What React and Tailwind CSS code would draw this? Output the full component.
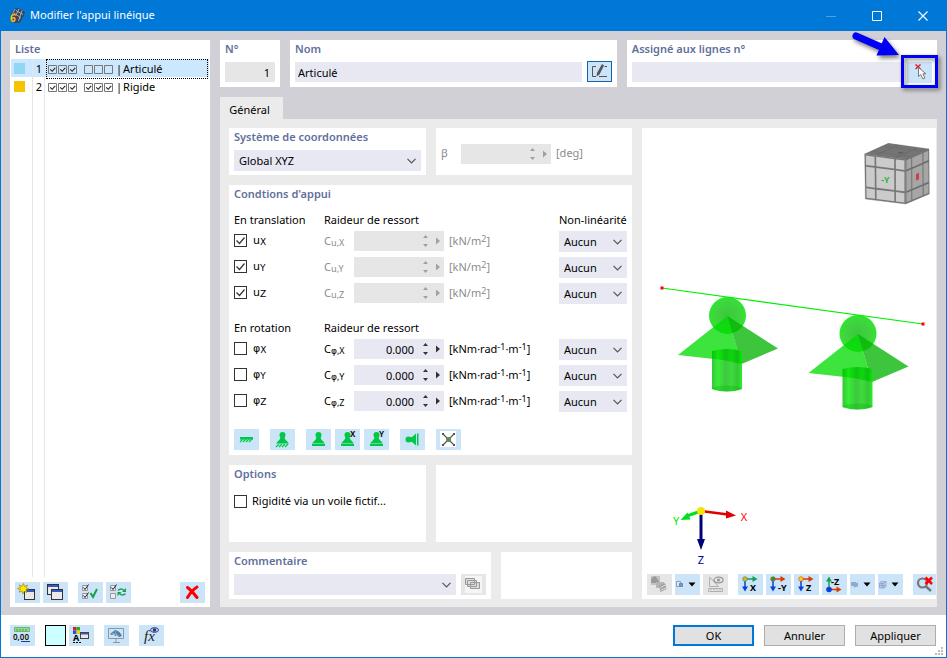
import { useState } from "react";

const AXES = ["X", "Y", "Z"];

const SUPPORTS = [
  { id: 1, name: "Articulé", swatch: "bg-[#8fd7f3]", translation: [true, true, true], rotation: [false, false, false] },
  { id: 2, name: "Rigide", swatch: "bg-[#f5c400]", translation: [true, true, true], rotation: [true, true, true] },
];

/* ---------- small controls ---------- */

const IconButton = ({ label, disabled, className = "", children }) => (
  <button
    type="button"
    aria-label={label}
    title={label}
    disabled={disabled}
    className={`flex h-[21px] w-[25px] shrink-0 items-center justify-center ${
      disabled ? "bg-[#e6e6e6]" : "bg-[#cce4f7] hover:bg-[#b8d9f3]"
    } ${className}`}
  >
    <svg width="25" height="21" viewBox="0 0 25 21" className="shrink-0" fill="none">
      {children}
    </svg>
  </button>
);

const Panel = ({ title, className = "", children }) => (
  <section className={`bg-white px-[5px] pb-[5px] ${className}`}>
    {title && <h2 className="h-[18px] leading-[18px] font-semibold text-[#5f709b]">{title}</h2>}
    {children}
  </section>
);

const CheckBox = ({ id, checked, onChange }) => (
  <span className="grid h-[13px] w-[13px] shrink-0">
    <input
      id={id}
      type="checkbox"
      checked={checked}
      onChange={onChange}
      className="peer col-start-1 row-start-1 h-[13px] w-[13px] appearance-none border border-[#333] bg-white"
    />
    <svg
      viewBox="0 0 13 13"
      className="pointer-events-none invisible col-start-1 row-start-1 peer-checked:visible"
      fill="none"
      stroke="#333"
      strokeWidth="1.2"
    >
      <path d="M2.500 6.500l3 3 5-6" />
    </svg>
  </span>
);

const DropDown = ({ label, options, className = "" }) => (
  <span className={`grid h-[21px] bg-[#e8e8f3] ${className}`}>
    <select
      aria-label={label}
      className="col-start-1 row-start-1 w-full appearance-none bg-transparent pt-0.5 pr-5 pl-[5px] outline-none"
    >
      {options.map((option) => (
        <option key={option}>{option}</option>
      ))}
    </select>
    <svg
      width="9"
      height="6"
      viewBox="0 0 9 6"
      className="pointer-events-none col-start-1 row-start-1 mr-[5px] self-center justify-self-end"
      fill="none"
      stroke="#555"
      strokeWidth="1.2"
    >
      <path d="M.5 .8l4 4 4-4" />
    </svg>
  </span>
);

const NumberField = ({ label, disabled, value }) => (
  <span className={`flex h-5 w-[90px] shrink-0 items-center ${disabled ? "bg-[#e6e6e6] text-[#a0a0a0]" : "bg-[#e8e8f3] text-[#333]"}`}>
    <input
      aria-label={label}
      disabled={disabled}
      defaultValue={value}
      key={String(disabled)}
      className="w-0 flex-1 bg-transparent pt-0.5 pr-2 text-right text-black outline-none"
    />
    <svg width="22" height="20" viewBox="0 0 22 20" fill="currentColor">
      <path d="M1 7l2.500-3L6 7zM1 13l2.500 3L6 13zM14 6.500v7l4-3.500z" />
    </svg>
  </span>
);

/* ---------- list ---------- */

const MiniChecks = ({ values }) => (
  <svg width="30" height="9" viewBox="0 0 30 9" fill="none" className="shrink-0">
    {values.map((on, i) => (
      <g key={i} transform={`translate(${i * 10} 0)`}>
        <path d="M.5 .5h8v8h-8z" stroke="#777" />
        {on && <path d="M2.200 4.300l2 2 3-3.500" stroke="#222" strokeWidth="1.1" />}
      </g>
    ))}
  </svg>
);

const SupportList = ({ selected, onSelect }) => (
  <div className="flex h-full min-h-0 flex-col bg-white px-px">
    <h2 className="h-[18px] pl-1 leading-[18px] font-semibold text-[#5f709b]">Liste</h2>
    <ul className="mt-px">
      {SUPPORTS.map((s) => (
        <li key={s.id}>
          <button
            type="button"
            onClick={() => onSelect(s.id)}
            className={`grid h-[18px] w-full grid-cols-[22px_12px_1fr] text-left ${selected === s.id ? "bg-[#cce8ff]" : ""}`}
          >
            <span className="flex h-full items-center border-r border-[#e6e6e6] pl-[3px]">
              <span className={`h-[11px] w-[11px] ${s.swatch}`} />
            </span>
            <span className="h-full border-r border-[#e6e6e6] pt-px pr-[2px] text-right leading-[18px]">{s.id}</span>
            <span
              className={`mx-px flex h-full items-center border border-dotted pt-px pl-px ${
                selected === s.id ? "border-black" : "border-transparent"
              }`}
            >
              <MiniChecks values={s.translation} />
              <span className="w-1.5" />
              <MiniChecks values={s.rotation} />
              <span className="flex gap-px pl-0.5">
                <span>|</span>
                <span>{s.name}</span>
              </span>
            </span>
          </button>
        </li>
      ))}
    </ul>
    <div className="grid flex-1 grid-cols-[22px_12px_1fr]">
      <span className="border-r border-[#e6e6e6]" />
      <span className="border-r border-[#e6e6e6]" />
    </div>
    <div className="flex gap-[3px] px-1 pt-[5px] pb-1">
      <IconButton label="Nouveau">
        <rect x="9.500" y="7.500" width="10" height="10" fill="#e9e9e9" stroke="#333" />
        <path d="M10 8h9v2h-9z" fill="#3558c8" />
        <path d="M8.500 1.500l1 3 3-1.500-1.500 3 3 1-3 .8 1 2.700-2.800-1.200-1.200 2.700-1-2.800-3 1 1.500-2.700-3-.9 3-1-1.300-2.600 2.700 1.200z" fill="#ffe600" stroke="#8a7a10" strokeWidth=".6" />
      </IconButton>
      <IconButton label="Copier">
        <rect x="4.500" y="2.500" width="11" height="10" fill="#e9e9e9" stroke="#333" />
        <path d="M5 3h10v2H5z" fill="#3558c8" />
        <rect x="8.500" y="7.500" width="11" height="10" fill="#e9e9e9" stroke="#333" />
        <path d="M9 8h10v2H9z" fill="#3558c8" />
      </IconButton>
      <IconButton label="Tout sélectionner" className="ml-[7px]">
        <path d="M4.500 3.500h5v5h-5zM4.500 11.500h5v5h-5z" fill="#eee" stroke="#999" />
        <path d="M5.500 5.500l1.500 2 3.500-5M5.500 13.500l1.500 2 3.500-5" stroke="#222" />
        <path d="M12.500 11l2.500 4 4-8" stroke="#17a24a" strokeWidth="2" />
      </IconButton>
      <IconButton label="Inverser la sélection">
        <path d="M4.500 3.500h5v5h-5zM4.500 11.500h5v5h-5z" fill="#eee" stroke="#999" />
        <path d="M5.500 5.500l1.500 2 3.500-5" stroke="#222" />
        <path d="M12 8.500q3-3 6 0M19.500 11.500q-3 3-6 0" stroke="#17a24a" strokeWidth="1.600" />
        <path d="M20 6v4h-4zM11.500 14v-4h4z" fill="#17a24a" />
      </IconButton>
      <IconButton label="Supprimer" className="ml-auto">
        <path d="M7.500 5.500q4 3 9.500 10M17 5q-5 3-9.500 10.500" stroke="#f00" strokeWidth="3" strokeLinecap="round" />
      </IconButton>
    </div>
  </div>
);

/* ---------- stiffness rows ---------- */

const Sub = ({ children }) => <sub className="bottom-0 align-[-1px] text-[9px]">{children}</sub>;

const Sup = ({ children }) => <sup className="top-[-3px] text-[9px]">{children}</sup>;

const SpringRows = ({ title, symbol, unit, checks, onToggle }) => (
  <>
    <div className="grid h-[18px] grid-cols-[90px_1fr_68px] leading-[18px]">
      <h3>{title}</h3>
      <span>Raideur de ressort</span>
      {symbol === "u" && <span className="whitespace-nowrap">Non-linéarité</span>}
    </div>
    <div className="mt-0.5 flex flex-col gap-[5px]">
      {AXES.map((axis, i) => {
        const fixed = checks[i];
        const id = `${symbol}-${axis}`;
        return (
          <div key={axis} className="grid h-[21px] grid-cols-[90px_30px_90px_1fr_68px]">
            <span className="flex h-[19px] items-center gap-1.5">
              <CheckBox id={id} checked={fixed} onChange={() => onToggle(i)} />
              <label htmlFor={id} className="font-['DejaVu_Sans','Noto_Sans',sans-serif] leading-[21px]">
                {symbol}
                <Sub>{axis}</Sub>
              </label>
            </span>
            <span className={`leading-5 whitespace-nowrap ${fixed ? "text-[#8c8c8c]" : ""}`}>
              C
              <Sub>
                <span className="font-['DejaVu_Sans',sans-serif]">{symbol}</span>,{axis}
              </Sub>
            </span>
            <NumberField label={`C ${symbol},${axis}`} disabled={fixed} value={fixed ? "" : "0.000"} />
            <span className={`pl-[5px] leading-5 whitespace-nowrap ${fixed ? "text-[#8c8c8c]" : ""}`}>{unit}</span>
            <DropDown label={`Non-linéarité ${symbol} ${axis}`} options={["Aucun"]} />
          </div>
        );
      })}
    </div>
  </>
);

const Cone = () => (
  <>
    <circle cx="12.500" cy="6" r="3" fill="#00c846" />
    <path d="M10.500 7h4l.5 3 4 4.500H6l4-4.500z" fill="#00c846" />
  </>
);

const Hatch = ({ y }) => (
  <path
    d={`M6 ${y + 3}l3-3M9 ${y + 3}l3-3M12 ${y + 3}l3-3M15 ${y + 3}l3-3`}
    stroke="#00c846"
    strokeWidth="1.200"
  />
);

const PresetButtons = () => (
  <div className="mt-[17px] flex">
    <IconButton label="Rigide">
      <path d="M6 8h13v2.500H6z" fill="#00c846" />
      <Hatch y={10} />
    </IconButton>
    <IconButton label="Articulé encastré" className="ml-[11px]">
      <Cone />
      <Hatch y={15} />
    </IconButton>
    <IconButton label="Articulé" className="ml-[11px]">
      <Cone />
      <path d="M6 15h13v2H6z" fill="#00c846" />
    </IconButton>
    {["X", "Y"].map((axis) => (
      <IconButton key={axis} label={`Glissant en ${axis}`} className="ml-1">
        <Cone />
        <path d="M6 15h13v2H6z" fill="#00c846" />
        <text x="15" y="8" fontSize="8" fontWeight="700" fill="#111">
          {axis}
        </text>
      </IconButton>
    ))}
    <IconButton label="Glissant en Z" className="ml-[11px]">
      <circle cx="8.500" cy="10.500" r="3" fill="#00c846" />
      <path d="M9 8.500l3-.5 4-3.500v12L12 13l-3-.5zM17 4.500h1.500v12H17z" fill="#00c846" />
    </IconButton>
    <IconButton label="Libre" className="ml-[11px]">
      <path d="M4 2h16v16H4z" fill="#fff" />
      <path d="M7 5l11 11M18 5L7 16" stroke="#555" strokeWidth="1.200" />
      <path d="M6 4h2v2H6zM17 4h2v2h-2zM6 15h2v2H6zM17 15h2v2h-2z" fill="#555" />
      <circle cx="12.500" cy="10.500" r="2.500" fill="#5d8a4f" />
    </IconButton>
  </div>
);

/* ---------- 3D view ---------- */

const FRONT = [[44, 72], [167, 88], [167, 222], [46, 207]];
const SIDE = [[167, 88], [237, 57], [238, 192], [167, 222]];
const TOP = [[44, 72], [115, 40], [237, 57], [167, 88]];
const SPLITS = [[0.03, 0.24], [0.28, 0.72], [0.76, 0.97]];

const pointOn = ([a, b, c, d], u, v) =>
  [0, 1]
    .map((k) => (1 - v) * ((1 - u) * a[k] + u * b[k]) + v * ((1 - u) * d[k] + u * c[k]))
    .map((n) => n.toFixed(1))
    .join(",");

const CubeFace = ({ quad, base, tile }) => (
  <>
    <polygon points={quad.map((p) => p.join(",")).join(" ")} fill={base} stroke={base} strokeWidth="1" />
    {SPLITS.flatMap(([u0, u1]) =>
      SPLITS.map(([v0, v1]) => (
        <polygon
          key={`${u0}-${v0}`}
          points={[pointOn(quad, u0, v0), pointOn(quad, u1, v0), pointOn(quad, u1, v1), pointOn(quad, u0, v1)].join(" ")}
          fill={tile}
        />
      ))
    )}
  </>
);

const SupportSymbol = () => (
  <>
    <circle cx="85.500" cy="187.500" r="18.500" fill="url(#ball)" />
    <path d="M85.500 188L36 227l45 5 18.500 4z" fill="#00dc00" fillOpacity=".76" />
    <path d="M85.500 188l50.500 32.500-36.500 15.500z" fill="#00b400" fillOpacity=".76" />
    <path d="M70 223q15-4 30 0v38q-15 5-30 0z" fill="url(#tube)" />
    <ellipse cx="85" cy="260.500" rx="15" ry="3" fill="#00b400" fillOpacity=".3" />
  </>
);

const ModelView = () => (
  <svg viewBox="0 0 294 446" className="min-h-0 w-full flex-1" fill="none" role="img" aria-label="Vue 3D de l'appui">
    <defs>
      <radialGradient id="ball">
        <stop offset="0" stopColor="#00b400" stopOpacity=".76" />
        <stop offset=".8" stopColor="#00cc00" stopOpacity=".76" />
        <stop offset="1" stopColor="#00e800" stopOpacity=".85" />
      </radialGradient>
      <linearGradient id="tube">
        <stop offset="0" stopColor="#00b400" stopOpacity=".78" />
        <stop offset=".2" stopColor="#00e800" stopOpacity=".78" />
        <stop offset=".45" stopColor="#00b800" stopOpacity=".76" />
        <stop offset=".65" stopColor="#00d000" stopOpacity=".76" />
        <stop offset=".85" stopColor="#00b400" stopOpacity=".78" />
        <stop offset="1" stopColor="#00f000" stopOpacity=".85" />
      </linearGradient>
    </defs>

    <g transform="translate(208 2) scale(.3333)">
      <CubeFace quad={TOP} base="#6a6a6a" tile="#757575" />
      <CubeFace quad={FRONT} base="#777" tile="#cbcbcb" />
      <CubeFace quad={SIDE} base="#6d6d6d" tile="#a6a6a6" />
      <text x="94" y="160" fontSize="26" fontWeight="700" fill="#2fb53a">
        -Y
      </text>
      <path d="M198 132l9-4v20l-9 4z" fill="#c9444a" />
      <path d="M143 68l14-3 4 3-14 3z" fill="#4d5a70" />
    </g>

    <SupportSymbol />
    <g transform="translate(130.500 18)">
      <SupportSymbol />
    </g>
    <path d="M20 160L281 196" stroke="#00f000" strokeWidth="1.200" />
    <path d="M18.500 158.500h3v3h-3zM279.500 194.500h3v3h-3z" fill="#f00" />

    <path d="M59 383v30" stroke="#00007a" strokeWidth="3" />
    <path d="M55 411h8l-4 11z" fill="#00007a" />
    <path d="M59 383l27 3.500" stroke="#e00000" strokeWidth="2.500" />
    <path d="M84 382.500l10 5-10 3z" fill="#e00000" />
    <path d="M59 383l-14 5" stroke="#00e020" strokeWidth="3" />
    <path d="M45.500 384.500l3 7-10 .5z" fill="#00e020" />
    <circle cx="59" cy="383" r="4" fill="#f5e400" />
    <g fontSize="11" textAnchor="middle">
      <text x="102" y="393" fill="#f00">X</text>
      <text x="34" y="397" fill="#00f000">Y</text>
      <text x="59" y="436" fill="#0000a0">Z</text>
    </g>
  </svg>
);

const ORANGE = "#d83b01";
const BLUE = "#0b3fd8";
const GREEN = "#12a055";

const ViewAxes = ({ down, right, dot, name }) => (
  <>
    <path d="M7 5v9" stroke={down} strokeWidth="1.500" />
    <path d="M4 12.500h6l-3 5z" fill={down} />
    <path d="M8 5h8" stroke={right} strokeWidth="1.500" />
    <path d="M14.500 2l5 3-5 3z" fill={right} />
    <circle cx="7" cy="5" r="2.300" fill={dot} stroke={right} strokeWidth=".6" />
    <text x="12" y="17" fontSize="9" fontWeight="700" fill="#000">
      {name}
    </text>
  </>
);

const ViewToolbar = () => (
  <div className="flex h-[25px] shrink-0 gap-[3px] overflow-hidden pb-1 pl-[5px]">
    <IconButton label="Imprimer" disabled>
      <path d="M4 2h9v9H4z" fill="#c2c2c2" />
      <path d="M4 5l4-3 4 5v2H4z" fill="#999" />
      <path d="M9 8h8v6H9z" fill="#b5b5b5" />
      <path d="M12 12l6-3 1.500 6-6 3z" fill="#a2a2a2" />
      <path d="M13 14l5-3M14 16l5-2" stroke="#ddd" />
    </IconButton>
    <IconButton label="Affichage">
      <path d="M1.500 7.500h4v5h-4z" fill="#dfe6f2" stroke="#8aa0c4" />
      <path d="M4.500 9.500h3v3h-3z" fill="#8295be" stroke="#7186b4" />
      <path d="M13.500 8.500h7L17 12.500z" fill="#000" />
    </IconButton>
    <IconButton label="Mesurer" disabled>
      <path d="M6.500 3v9.500h9zM5.500 14.500h14v3h-14z" stroke="#b0b0b0" />
      <path d="M8 15v1.500M11 15v1.500M14 15v1.500M17 15v1.500" stroke="#b0b0b0" />
      <ellipse cx="15.500" cy="6" rx="4.500" ry="2.800" stroke="#999" strokeWidth="1.300" />
      <circle cx="15.500" cy="6" r="1.600" fill="#999" />
    </IconButton>
    <IconButton label="Vue X" className="ml-[7px]">
      <ViewAxes down={BLUE} right={GREEN} dot="#ffa51f" name="X" />
    </IconButton>
    <IconButton label="Vue -Y">
      <ViewAxes down={BLUE} right={ORANGE} dot={GREEN} name="-Y" />
    </IconButton>
    <IconButton label="Vue Z">
      <ViewAxes down={BLUE} right={ORANGE} dot="#ffd21f" name="Z" />
    </IconButton>
    <IconButton label="Vue -Z">
      <path d="M7 15V6" stroke={GREEN} strokeWidth="1.500" />
      <path d="M4 7.500h6l-3-5z" fill={GREEN} />
      <path d="M8 15.500h8" stroke={ORANGE} strokeWidth="1.500" />
      <path d="M14.500 12.500l5 3-5 3z" fill={ORANGE} />
      <circle cx="7" cy="15.500" r="2.800" fill={BLUE} />
      <text x="9" y="11" fontSize="9" fontWeight="700" fill="#000">
        -Z
      </text>
    </IconButton>
    <IconButton label="Mode de rendu">
      <path d="M1 8h5v4H1zM3 9.500l5-1v4l-4 1z" fill="#8faad0" />
      <path d="M13.500 8.500h7L17 12.500z" fill="#000" />
    </IconButton>
    <IconButton label="Projection">
      <path d="M1.500 9.500h4.500v4.500H1.500zM1.500 9.500l1.500-2h5l-2 2M8 7.500v5l-2 1.500M4 9v5M1.500 11.500h6" fill="#b9cbe6" stroke="#8095c0" strokeWidth=".6" />
      <path d="M13.500 8.500h7L17 12.500z" fill="#000" />
    </IconButton>
    <IconButton label="Réinitialiser" className="ml-[7px]">
      <circle cx="9.500" cy="9" r="4.500" stroke="#777" strokeWidth="2.200" />
      <path d="M13 12.500l5 4.500" stroke="#777" strokeWidth="2.500" />
      <path d="M12.500 3.500l6.500 6.500M19 3.500L12.500 10" stroke="#f00" strokeWidth="2.500" />
    </IconButton>
  </div>
);

/* ---------- window chrome ---------- */

const TitleBar = () => (
  <header className="flex h-[31px] items-center bg-[#0078d7] pl-2 text-white">
    <svg width="16" height="16" viewBox="0 0 16 16" className="overflow-visible" fill="none">
      <path d="M2 5l4-4.500h4l6 3.500-2 5-3 5.500-6 .5z" fill="#3d4450" />
      <path d="M5 5l7 5M7 2.500l7 4M6 1L3.500 6M10 1L6.500 8M13 2.500L9.500 13" stroke="#aeb9c6" strokeWidth=".9" />
      <text x="1" y="14" fontSize="10" fontWeight="700" fill="#ffc20e">
        6
      </text>
    </svg>
    <h1 className="flex-1 pl-[5px] text-[11px]">Modifier l'appui linéique</h1>
    <button type="button" aria-label="Réduire" className="flex h-full w-[46px] items-center justify-center">
      <svg width="10" height="10" stroke="#4da0e3" fill="none">
        <path d="M0 5.500h10" />
      </svg>
    </button>
    <button type="button" aria-label="Agrandir" className="flex h-full w-[46px] items-center justify-center">
      <svg width="10" height="10" stroke="#fff" fill="none">
        <path d="M.5 .5h9v9h-9z" />
      </svg>
    </button>
    <button type="button" aria-label="Fermer" className="flex h-full w-[46px] items-center justify-center">
      <svg width="10" height="10" stroke="#fff" strokeWidth="1.200" fill="none">
        <path d="M.5 .5l9 9M9.500 .5l-9 9" />
      </svg>
    </button>
  </header>
);

const Footer = () => (
  <footer className="relative flex shrink-0 items-center bg-white pt-2.5 pr-2.5 pb-[11px] pl-[9px]">
    <IconButton label="Unités">
      <path d="M4.500 2.500h15v4h-15z" fill="#8fdc8f" stroke="#6ab86a" />
      <path d="M7 4v2M10 4v2M13 4v2M16 4v2" stroke="#4b9a4b" />
      <text x="3" y="15" fontSize="8" fontWeight="600" fill="#111">
        0,00
      </text>
      <path d="M11 16.500h9" stroke="#1a3f8f" />
    </IconButton>
    <button type="button" aria-label="Couleur" className="ml-2.5 h-[21px] w-[21px] border border-black bg-[#ccffff]" />
    <IconButton label="Style d'affichage" className="ml-[3px]">
      <path d="M4 2h3.500v3.500H4z" fill="#e02020" />
      <path d="M7.500 2H11v3.500H7.500z" fill="#20b020" />
      <path d="M4 5.500h3.500V9H4z" fill="#2050e0" />
      <path d="M7.500 5.500H11V9H7.500z" fill="#f0d000" />
      <text x="4" y="16" fontSize="9" fontWeight="700" fill="#000">
        A
      </text>
      <path d="M4 17.500h8" stroke="#000" strokeDasharray="2 1" />
      <rect x="11.500" y="7.500" width="8" height="6" fill="#e9e9e9" stroke="#444" />
      <path d="M12 8h7v1.500h-7z" fill="#3558c8" />
    </IconButton>
    <IconButton label="Aperçu" className="ml-2.5">
      <path d="M4.500 3.500h15v10h-15z" stroke="#8d97a3" />
      <path d="M12 14v3M9 17.500h7" stroke="#8d97a3" />
      <path d="M6 9l5-4q5 1 7 6l-3 1q-2-2-4-1l-1-2-2 1z" fill="#4c7fae" />
      <path d="M8 8l7 3M11 6l2 5" stroke="#a7c4de" strokeWidth=".7" />
    </IconButton>
    <IconButton label="Formules" className="ml-2.5">
      <text x="5" y="16" fontSize="15" fontStyle="italic" fontFamily="Liberation Serif, serif" fill="#222">
        fx
      </text>
      <ellipse cx="15.500" cy="5" rx="4" ry="2.300" fill="#cce4f7" stroke="#2a2f80" />
      <circle cx="15.500" cy="5" r="1.800" fill="#2a2f80" />
    </IconButton>
    <div className="ml-auto flex gap-2.5">
      <button type="submit" className="h-[21px] w-[81px] border-2 border-[#0078d7] bg-[#e1e1e1] leading-[18px]">
        OK
      </button>
      <button type="button" className="h-[21px] w-[81px] border border-[#adadad] bg-[#e1e1e1] pt-px leading-[18px]">
        Annuler
      </button>
      <button type="button" className="h-[21px] w-[81px] border border-[#adadad] bg-[#e1e1e1] pt-px leading-[18px]">
        Appliquer
      </button>
    </div>
    <svg width="8" height="8" viewBox="0 0 8 8" className="absolute right-[3px] bottom-0.5" fill="#bbb">
      <path d="M6 0h2v2H6zM3 3h2v2H3zM6 3h2v2H6zM0 6h2v2H0zM3 6h2v2H3zM6 6h2v2H6z" />
    </svg>
  </footer>
);

const App = () => {
  const [selected, setSelected] = useState(1);
  const [translation, setTranslation] = useState(SUPPORTS[0].translation);
  const [rotation, setRotation] = useState(SUPPORTS[0].rotation);
  const [shearWall, setShearWall] = useState(false);

  const current = SUPPORTS.find((s) => s.id === selected);

  const selectSupport = (id) => {
    const next = SUPPORTS.find((s) => s.id === id);
    setSelected(id);
    setTranslation(next.translation);
    setRotation(next.rotation);
  };

  const toggle = (setter) => (index) => setter((prev) => prev.map((v, i) => (i === index ? !v : v)));

  return (
    <div className="flex min-h-screen flex-col border border-t-0 border-[#0078d7] bg-[#d1d0d6] font-['Noto_Sans','Open_Sans',sans-serif] text-[11px] text-black">
      <TitleBar />

      <div className="grid flex-1 grid-cols-[200px_minmax(0,1fr)] gap-2.5 px-[9px] pt-[9px] pb-2">
        <SupportList selected={selected} onSelect={selectSupport} />

        <main className="flex min-w-0 flex-col">
          <div className="flex gap-2.5">
            <Panel title="N°" className="w-[60px] shrink-0">
              <input
                aria-label="N°"
                readOnly
                value={selected}
                className="mt-1 block h-5 w-full bg-[#e6e6e6] pt-px pr-[5px] text-right outline-none"
              />
            </Panel>
            <Panel title="Nom" className="min-w-0 flex-[327]">
              <div className="mt-1 flex gap-[5px]">
                <input
                  aria-label="Nom"
                  key={selected}
                  defaultValue={current.name}
                  className="h-5 w-0 flex-1 bg-[#e8e8f3] pt-px pl-[3px] outline-none"
                />
                <IconButton label="Modifier le nom" className="-my-px outline -outline-offset-1 outline-[#1462a8]">
                  <path d="M9 5.500H5.500v10H9M12 15.500h8M17.500 5.500H20" stroke="#555" />
                  <path d="M15 3l2 1.500-4.500 9-3 2 .5-3.500z" fill="#555" />
                </IconButton>
              </div>
            </Panel>
            <Panel title="Assigné aux lignes n°" className="min-w-0 flex-[310]">
              <div className="mt-1 flex gap-[5px]">
                <input aria-label="Assigné aux lignes n°" className="h-5 w-0 flex-1 bg-[#e8e8f3] outline-none" />
                <div className="relative h-5">
                  <IconButton label="Sélectionner dans le graphique">
                    <path d="M8.500 2.500l5 4.500M13.500 2.500l-5 4.500" stroke="#e01020" strokeWidth="1.300" />
                    <path d="M11.500 5.500v9l2.200-2 2.300 4.500 2-1-2.200-4.200h3.200z" fill="#fff" stroke="#777" />
                  </IconButton>
                  <span className="pointer-events-none absolute -top-[7px] -left-[6px] h-[33px] w-[37px] border-3 border-[#0000f5] drop-shadow-[2px_2px_2px_rgba(0,0,0,0.5)]" />
                  <svg
                    width="56"
                    height="34"
                    viewBox="0 0 56 34"
                    className="pointer-events-none absolute -top-8 right-[30px] drop-shadow-[2px_3px_2px_rgba(0,0,0,0.5)]"
                  >
                    <path d="M10 6l25 11" stroke="#0000f5" strokeWidth="7" strokeLinecap="round" />
                    <path d="M38.500 7L53 25l-22.500.5z" fill="#0000f5" />
                  </svg>
                </div>
              </div>
            </Panel>
          </div>

          <div role="tablist" className="mt-2.5 flex">
            <button type="button" role="tab" aria-selected="true" className="h-[22px] w-[63px] bg-[#ebebeb] pt-1 pr-1">
              Général
            </button>
          </div>

          <div className="flex flex-1 gap-2.5 bg-[#ebebeb] pt-[9px] pr-px pb-2 pl-[9px]">
            <div className="flex w-[403px] shrink-0 flex-col gap-2.5">
              <div className="flex gap-2.5">
                <Panel title="Système de coordonnées" className="w-[197px]">
                  <DropDown label="Système de coordonnées" options={["Global XYZ"]} className="mt-1 -mb-px" />
                </Panel>
                <Panel className="flex flex-1 items-center pt-[9px] text-[#8c8c8c]">
                  <span className="w-5">β</span>
                  <NumberField label="β" disabled value="" />
                  <span className="pl-[5px]">[deg]</span>
                </Panel>
              </div>

              <Panel title="Condtions d'appui">
                <div className="mt-2">
                  <SpringRows
                    title="En translation"
                    symbol="u"
                    unit={<>[kN/m<Sup>2</Sup>]</>}
                    checks={translation}
                    onToggle={toggle(setTranslation)}
                  />
                </div>
                <div className="mt-[15px]">
                  <SpringRows
                    title="En rotation"
                    symbol="φ"
                    unit={<>[kNm·rad<Sup>-1</Sup>·m<Sup>-1</Sup>]</>}
                    checks={rotation}
                    onToggle={toggle(setRotation)}
                  />
                </div>
                <PresetButtons />
              </Panel>

              <div className="flex flex-1 gap-2.5">
                <Panel title="Options" className="w-[197px]">
                  <div className="mt-[9px] flex h-[19px] items-center gap-[5px]">
                    <CheckBox id="shear-wall" checked={shearWall} onChange={() => setShearWall(!shearWall)} />
                    <label htmlFor="shear-wall">Rigidité via un voile fictif...</label>
                  </div>
                </Panel>
                <Panel className="flex-1" />
              </div>

              <div className="flex gap-2.5">
                <Panel title="Commentaire" className="w-[262px]">
                  <div className="mt-1 -mb-px flex gap-[5px]">
                    <DropDown label="Commentaire" options={[""]} className="flex-1" />
                    <IconButton label="Modèles de commentaire" disabled>
                      <path d="M4 2h17v17H4z" fill="#f6f6f6" />
                      <path d="M4.500 4.500h9v6h-9zM6.500 6.500h9v6h-9zM9.500 8.500h9v6h-9z" fill="#ddd" stroke="#999" />
                    </IconButton>
                  </div>
                </Panel>
                <Panel className="flex-1" />
              </div>
            </div>

            <div className="flex min-w-0 flex-1 flex-col bg-white">
              <ModelView />
              <ViewToolbar />
            </div>
          </div>
        </main>
      </div>

      <Footer />
    </div>
  );
};

export default App;
